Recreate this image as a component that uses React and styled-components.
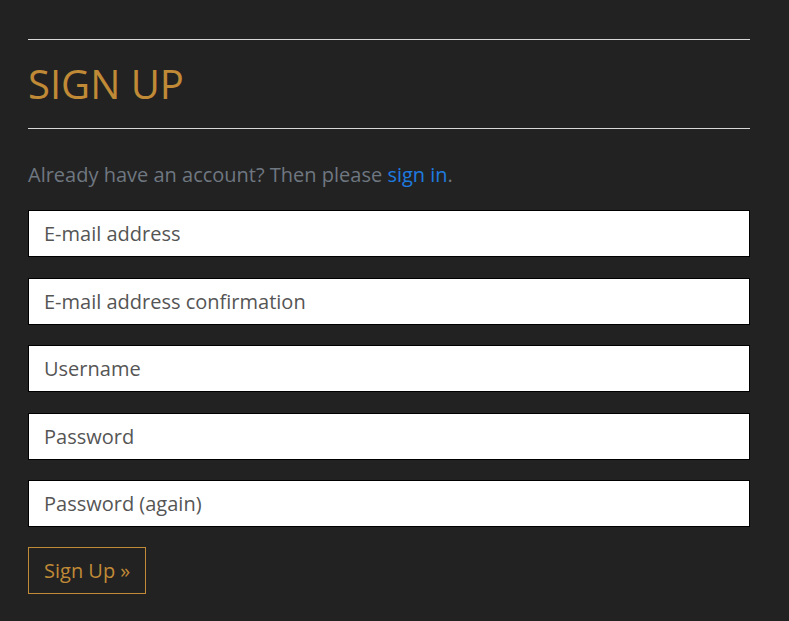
import React from "react";
import styled, { createGlobalStyle } from "styled-components";

const Global = createGlobalStyle`
  html, body { margin: 0; padding: 0; background: #222222; }
  body { font-family: "Open Sans", "Liberation Sans", sans-serif; }
`;

const Page = styled.div`
  padding: 39px 39px 30px 28px;
  width: 722px;
`;

const Rule = styled.hr`
  border: none;
  border-top: 1px solid #d8d8d8;
  margin: 0;
`;

const Title = styled.h1`
  font-weight: 400;
  font-size: 40px;
  color: #c08a36;
  margin: 0;
  padding: 20px 0 20px;
  line-height: 48px;
`;

const Lead = styled.p`
  margin: 31px 0 20px;
  font-size: 20px;
  line-height: 30px;
  color: #6f7781;
  a { color: #1e7be0; text-decoration: none; }
`;

const Form = styled.form`
  display: flex;
  flex-direction: column;
  gap: 20.5px;
  align-items: flex-start;
`;

const Input = styled.input`
  box-sizing: border-box;
  width: 722px;
  height: 47px;
  border: 1px solid #000;
  background: #fff;
  padding: 0 15px;
  font-family: inherit;
  font-size: 20px;
  color: #333;
  outline: none;
  &::placeholder { color: #555; }
`;

const Button = styled.button`
  box-sizing: border-box;
  height: 47px;
  margin-top: -0.5px;
  padding: 0 15px;
  background: transparent;
  border: 1px solid #c08a36;
  color: #c08a36;
  font-family: inherit;
  font-size: 20px;
`;

export default function App() {
  const fields = [
    "E-mail address",
    "E-mail address confirmation",
    "Username",
    "Password",
    "Password (again)",
  ];
  return (
    <>
      <Global />
      <Page>
        <Rule />
        <Title>SIGN UP</Title>
        <Rule />
        <Lead>
          Already have an account? Then please <a href="#">sign in</a>.
        </Lead>
        <Form onSubmit={(e) => e.preventDefault()}>
          {fields.map((f, i) => (
            <Input key={f} placeholder={f} type={i >= 3 ? "password" : "text"} />
          ))}
          <Button type="submit">Sign Up »</Button>
        </Form>
      </Page>
    </>
  );
}
